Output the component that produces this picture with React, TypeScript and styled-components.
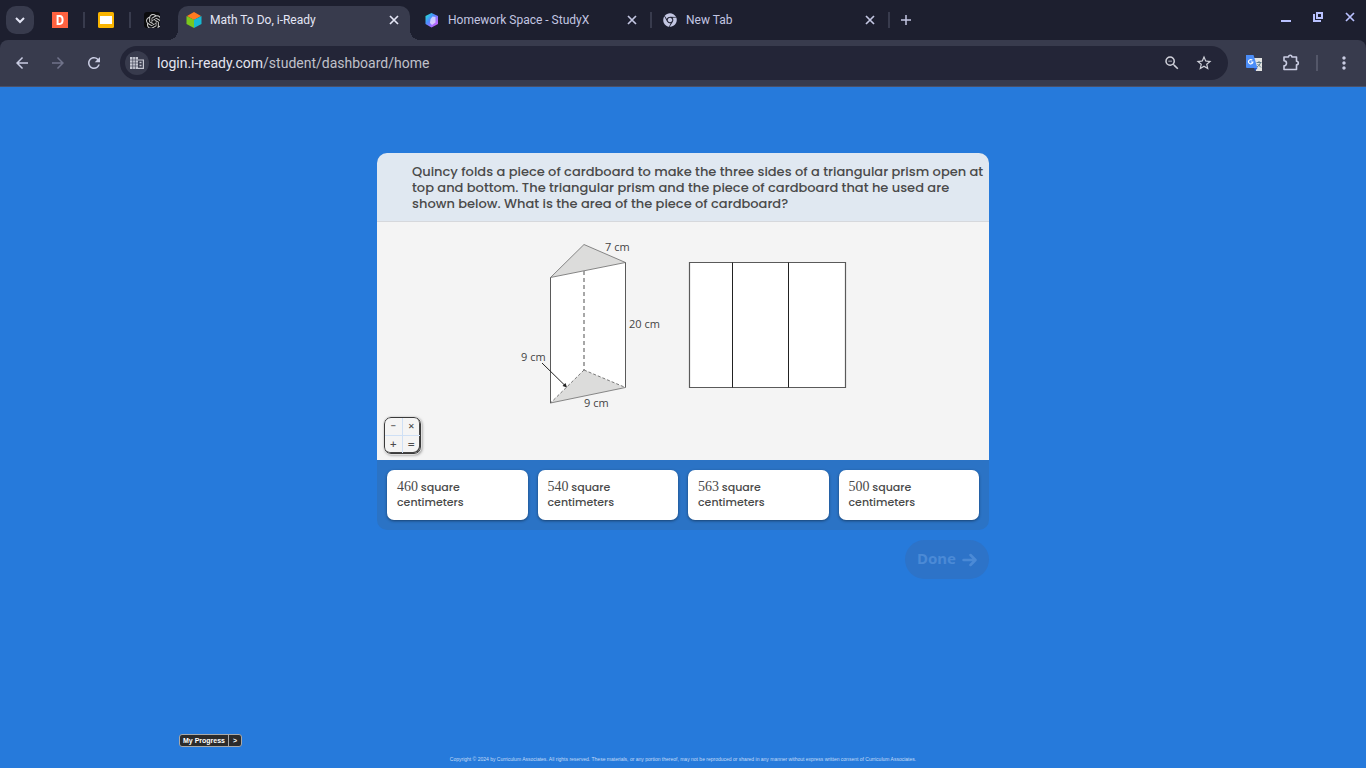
import React from "react";
import styled, { createGlobalStyle, css } from "styled-components";
import {
  MdArrowBack,
  MdArrowForward,
  MdMoreVert,
  MdRefresh,
  MdStarOutline,
  MdZoomOut,
} from "react-icons/md";
import { FaChrome } from "react-icons/fa";
import { SiOpenai } from "react-icons/si";

const GlobalStyle = createGlobalStyle`
  * { box-sizing: border-box; }
  body { margin: 0; background: #267adb; font-family: Roboto, "Liberation Sans", sans-serif; }
  button, input { font: inherit; color: inherit; }
  button { border: 0; padding: 0; background: none; cursor: pointer; }
`;

const Page = styled.div`
  display: flex;
  flex-direction: column;
  min-height: 100vh;
`;

const TabStrip = styled.div`
  display: flex;
  align-items: flex-end;
  height: 40px;
  padding-left: 6px;
  background: #1d1f2f;
`;

const TabSearch = styled.button`
  display: grid;
  place-items: center;
  flex: none;
  width: 28px;
  height: 28px;
  margin: 0 3px 6px 0;
  border-radius: 10px;
  background: #383b4d;
  color: #e4e6f5;
`;

const separator = css`
  &::after {
    content: "";
    position: absolute;
    left: 100%;
    top: 6px;
    width: 2px;
    height: 16px;
    background: #383b4d;
  }
`;

const PinnedTab = styled.button<{ $divided?: boolean }>`
  position: relative;
  display: grid;
  place-items: center;
  flex: none;
  width: 46px;
  height: 28px;
  margin-bottom: 6px;
  ${(p) => p.$divided && separator}
`;

const Tab = styled.div<{ $active?: boolean; $divided?: boolean }>`
  position: relative;
  display: flex;
  align-items: center;
  gap: 8px;
  flex: 0 1 ${(p) => (p.$active ? 232 : 238)}px;
  min-width: 0;
  height: ${(p) => (p.$active ? 34 : 28)}px;
  margin: ${(p) => (p.$active ? "0 2px 0 3px" : "0 0 6px")};
  padding: ${(p) => (p.$active ? "0 8px 6px" : "0 10px 0 12px")};
  color: ${(p) => (p.$active ? "#e4e6f5" : "#c3c6e2")};
  font-size: 12px;
  line-height: 16px;
  ${(p) => p.$divided && separator}
  ${(p) =>
    p.$active &&
    css`
      border-radius: 10px 10px 0 0;
      background: #383b4d;
      &::before,
      &::after {
        content: "";
        position: absolute;
        bottom: 0;
        width: 10px;
        height: 10px;
      }
      &::before {
        right: 100%;
        background: radial-gradient(circle at 0 0, transparent 10px, #383b4d 10px);
      }
      &::after {
        left: 100%;
        background: radial-gradient(circle at 100% 0, transparent 10px, #383b4d 10px);
      }
    `}
`;

const TabIcon = styled.span`
  display: grid;
  place-items: center;
  flex: none;
  width: 16px;
  height: 16px;
`;

const TabTitle = styled.span`
  flex: 1;
  overflow: hidden;
  white-space: nowrap;
`;

const IconButton = styled.button<{ $size?: number; $dim?: boolean }>`
  display: grid;
  place-items: center;
  flex: none;
  width: ${(p) => p.$size ?? 16}px;
  height: ${(p) => p.$size ?? 16}px;
  color: ${(p) => (p.$dim ? "#70738a" : "inherit")};
`;

const NewTab = styled(IconButton)`
  margin: 0 0 12px 10px;
  color: #c3c6e2;
`;

const WindowControls = styled.div`
  display: flex;
  align-self: flex-start;
  gap: 16px;
  margin-left: auto;
  padding: 9px 8px 0 0;
  color: #b9c1ff;
`;

const ToolbarBack = styled.div`
  background: #1d1f2f;
`;

const Toolbar = styled.div`
  display: flex;
  align-items: center;
  height: 47px;
  padding: 0 12px;
  border-bottom: 1px solid #4b5067;
  border-radius: 8px 8px 0 0;
  background: #383b4d;
  color: #c9cce2;
`;

const NavButtons = styled.div`
  display: flex;
  gap: 16px;
  margin-right: 16px;
`;

const AddressBar = styled.div`
  display: flex;
  align-items: center;
  flex: 1;
  min-width: 0;
  height: 34px;
  padding: 0 14px 0 5px;
  gap: 12px;
  border-radius: 17px;
  background: #232537;
  color: #d0d1da;
`;

const SiteInfo = styled.button`
  display: grid;
  place-items: center;
  flex: none;
  width: 24px;
  height: 24px;
  border-radius: 50%;
  background: #383b4d;
  color: #c5c7d2;
`;

const Address = styled.a`
  flex: 1;
  margin-left: -4px;
  overflow: hidden;
  white-space: nowrap;
  font-size: 14px;
  line-height: 20px;
  color: #c0c1ca;
  text-decoration: none;
`;

const Host = styled.span`
  color: #e3e4ef;
`;

const Extensions = styled.div`
  display: flex;
  align-items: center;
  gap: 16px;
  margin-left: 16px;
`;

const ToolbarDivider = styled.span`
  width: 2px;
  height: 16px;
  background: #545769;
`;

const Lesson = styled.main`
  display: flex;
  flex-direction: column;
  align-items: flex-end;
  gap: 10px;
  width: 100%;
  max-width: 612px;
  margin: 0 auto;
  padding-top: 66px;
`;

const Card = styled.section`
  width: 100%;
  overflow: hidden;
  border-radius: 10px;
  background: #2b73c5;
  color: #4a4a4a;
  font-family: Poppins, Inter, sans-serif;
`;

const Question = styled.h1`
  margin: 0;
  padding: 11px 4px 9px 35px;
  border-bottom: 1px solid #d6d8dc;
  background: #e0e8f1;
  font-size: 13px;
  font-weight: 500;
  line-height: 16px;
`;

const FigurePanel = styled.div`
  position: relative;
  display: flex;
  justify-content: center;
  padding: 14px 0 44px;
  background: #f4f4f4;
`;

const Figure = styled.svg`
  display: block;
  max-width: 100%;
  font-family: "Open Sans", sans-serif;
  font-size: 11px;
  font-weight: 400;
`;

const Calculator = styled.button`
  position: absolute;
  left: 7px;
  bottom: 6px;
  display: grid;
  grid-template-columns: 1fr 1fr;
  width: 37px;
  height: 37px;
  overflow: hidden;
  border: 1px solid #3a3a3a;
  border-radius: 7px;
  outline: 1px solid #dedede;
  background: #f4f4f4;
  box-shadow: inset -1px -1px 0 #444, 1px 1px 3px #00000080;
  font-size: 11px;
  line-height: 17px;
`;

const Key = styled.span`
  border: 0 solid #cfe0f5;
  &:nth-child(odd) {
    border-right-width: 1px;
  }
  &:nth-child(-n + 2) {
    border-bottom-width: 1px;
  }
`;

const Answers = styled.div`
  display: grid;
  grid-template-columns: repeat(auto-fit, minmax(120px, 1fr));
  gap: 10px;
  padding: 10px;
`;

const Answer = styled.button`
  padding: 10px;
  border-radius: 7px;
  background: #fff;
  box-shadow: 0 1px 3px #00000070;
  text-align: left;
  font-size: 11px;
  font-weight: 500;
  line-height: 15px;
`;

const MathNumber = styled.span`
  font-family: "Liberation Serif", serif;
  font-size: 14px;
  font-weight: 400;
  line-height: 10px;
`;

const DoneButton = styled.button`
  display: flex;
  align-items: center;
  gap: 6px;
  height: 39px;
  padding: 0 12px;
  border-radius: 20px;
  background: #2d73c8;
  color: #4b8ad6;
  font-family: "Noto Sans", sans-serif;
  font-size: 15px;
  font-weight: 700;
  line-height: 20px;
`;

const DoneLabel = styled.span`
  padding-bottom: 3px;
`;

const Footer = styled.footer`
  width: 100%;
  max-width: 1008px;
  margin: auto auto 0;
  padding-bottom: 5px;
`;

const Progress = styled.div`
  display: flex;
  width: max-content;
  overflow: hidden;
  border: 1px solid #a9a9a9;
  border-radius: 3px;
  background: #2b2b2b;
  color: #fff;
  font-family: "Liberation Sans", sans-serif;
  font-size: 7px;
  font-weight: 700;
  line-height: 11px;
`;

const ProgressButton = styled.button`
  padding: 0 3px;
  & + & {
    padding: 0 4px;
    border-left: 1px solid #a9a9a9;
  }
`;

const Copyright = styled.p`
  margin: 8px 0 0;
  color: #c4dbf6;
  font-family: "Liberation Sans", sans-serif;
  font-size: 5px;
  line-height: 8px;
  text-align: center;
`;

const ChevronIcon = () => (
  <svg width="12" height="12" viewBox="0 0 12 12" fill="none" stroke="currentColor" strokeWidth="2">
    <path d="M2 4l4 4 4-4" />
  </svg>
);

const DocIcon = () => (
  <svg width="16" height="16" viewBox="0 0 16 16">
    <rect width="16" height="16" fill="#ff6240" />
    <path d="M5.6 4.1h2c2 0 3 1.5 3 3.9s-1 3.9-3 3.9h-2z" fill="none" stroke="#fff" strokeWidth="2" />
  </svg>
);

const SlidesIcon = () => (
  <svg width="16" height="16" viewBox="0 0 16 16">
    <rect width="16" height="16" rx="1.5" fill="#f9b400" />
    <rect x="2" y="4" width="12" height="8" fill="#fff" />
  </svg>
);

const ChatIcon = () => (
  <svg width="16" height="16" viewBox="0 0 16 16">
    <rect width="16" height="16" rx="3" fill="#0b0b0d" />
    <SiOpenai x="2" y="2" width="12" height="12" color="#c8c8c8" />
  </svg>
);

const CubeIcon = () => (
  <svg width="16" height="16" viewBox="0 0 16 16">
    <path d="M8 0l7 4-7 4-7-4z" fill="#ff7a20" />
    <path d="M.5 4L8 7.8V16L.5 12z" fill="#7ac81e" />
    <path d="M15.500 4L8 7.800V16l7.500-4z" fill="#17b9d3" />
  </svg>
);

const StudyIcon = () => (
  <svg width="16" height="16" viewBox="0 0 16 16">
    <defs>
      <linearGradient id="study" x1="0" y1="0" x2="1" y2="1">
        <stop offset="0" stopColor="#18f0c8" />
        <stop offset=".4" stopColor="#4d8cff" />
        <stop offset=".7" stopColor="#a66cff" />
        <stop offset="1" stopColor="#e05cf5" />
      </linearGradient>
    </defs>
    <path d="M7.500 1L14 4v8l-6.500 3.500L1.500 12V4z" fill="url(#study)" />
    <path d="M8.500 4.500l3 .5v5.500L8 13l-2-2 .5-4z" fill="#ece6ff" opacity=".75" />
  </svg>
);

const CloseIcon = () => (
  <svg width="16" height="16" viewBox="-8 -8 16 16" fill="none" stroke="currentColor" strokeWidth="1.700">
    <path d="M-4 -4L4 4M4 -4L-4 4" />
  </svg>
);

const PlusIcon = () => (
  <svg width="16" height="16" viewBox="0 0 16 16" fill="none" stroke="currentColor" strokeWidth="1.500">
    <path d="M8 3v10M3 8h10" />
  </svg>
);

const BuildingIcon = () => (
  <svg width="14" height="12" viewBox="0 0 14 12">
    <path d="M0 0h8v12H0z" fill="currentColor" />
    <path d="M8 3h5.400v8.400H8" fill="none" stroke="currentColor" strokeWidth="1.200" />
    <path d="M0 3h8M0 6h8M0 9h8M2.700 0v12M5.400 0v12" stroke="#383b4d" strokeWidth=".6" />
    <path d="M9.500 5.500h2M9.500 8.500h2" stroke="currentColor" strokeWidth="1.300" />
  </svg>
);

const PuzzleIcon = () => (
  <svg width="20" height="20" viewBox="0 0 20 20" fill="none" stroke="currentColor" strokeWidth="1.600" strokeLinejoin="round">
    <path d="M4 4h4.500a1.700 1.700 0 0 1 3.400 0H16.500v4.300a1.700 1.700 0 0 1 0 3.600V16.500H4v-3.700a2.500 2.500 0 0 0 0-5z" />
  </svg>
);

const TranslateIcon = () => (
  <svg width="16" height="16" viewBox="0 0 16 16">
    <path d="M7 3h9v13H10z" fill="#e3e4e2" />
    <path d="M10.500 7.500h5M13 6v1.500M14.500 7.500c-.5 2-2 3.500-3.500 4.500M11.500 9l3.500 3.500" fill="none" stroke="#607d8b" />
    <path d="M8 13h3.500L9 16z" fill="#2352c4" />
    <path d="M0 0h7.500l4 13H1a1 1 0 0 1-1-1z" fill="#4b8df8" />
    <path d="M6.300 5.200A2.200 2.200 0 1 0 6.900 7H4.800" fill="none" stroke="#fff" strokeWidth="1.200" />
  </svg>
);

const MinimizeIcon = () => (
  <svg width="16" height="16" viewBox="0 0 16 16">
    <path d="M3 11h10v2H3z" fill="currentColor" />
  </svg>
);

const RestoreIcon = () => (
  <svg width="16" height="16" viewBox="0 0 16 16" fill="none" stroke="currentColor" strokeWidth="2">
    <path d="M7 4h5v5H7zM4 5v7h7" />
  </svg>
);

const PrismFigure = () => (
  <Figure width="340" height="180" viewBox="0 0 340 180" role="img" aria-label="Triangular prism and flat cardboard">
    <g fill="none" stroke="#5a5a5a">
      <path d="M37.500 41.500L112.500 26.500V151.500L37.500 167z" fill="#fff" stroke="none" />
      <path d="M71 134L112.500 151.500L37.500 167z" fill="#dcdcdb" stroke="none" />
      <path d="M71 8.500L112.500 26.500L37.500 41.500z" fill="#dcdcdb" strokeWidth=".7" />
      <path d="M37.500 41.500V167M112.500 26.500V151.500" />
      <path d="M37.500 167L112.500 151.500" strokeWidth=".7" />
      <path d="M71 35V134" stroke="#8a8a8a" strokeWidth="1.500" strokeDasharray="4 3" />
      <path d="M71 134L112.500 151.500M71 134L37.500 167" strokeWidth=".8" strokeDasharray="3 2" />
      <path d="M29 127L52 149.500" stroke="#222" />
      <path d="M54 151.500l-4.500-1.500 3-3z" fill="#222" stroke="none" />
      <path d="M176.500 26.500H332.500V151.500H176.500z" fill="#fff" strokeWidth="1.200" />
      <path d="M219.500 26.500V151.500M275.500 26.500V151.500" stroke="#222" />
    </g>
    <g fill="#444">
      <text x="92" y="15">7 cm</text>
      <text x="116" y="92">20 cm</text>
      <text x="8" y="125">9 cm</text>
      <text x="71" y="171">9 cm</text>
    </g>
  </Figure>
);

const answers = [460, 540, 563, 500];

export default function App() {
  return (
    <Page>
      <GlobalStyle />
      <TabStrip>
        <TabSearch aria-label="Search tabs"><ChevronIcon /></TabSearch>
        <PinnedTab $divided aria-label="Pinned document"><DocIcon /></PinnedTab>
        <PinnedTab $divided aria-label="Pinned slides"><SlidesIcon /></PinnedTab>
        <PinnedTab aria-label="Pinned chat"><ChatIcon /></PinnedTab>
        <Tab $active>
          <TabIcon><CubeIcon /></TabIcon>
          <TabTitle>Math To Do, i-Ready</TabTitle>
          <IconButton aria-label="Close tab"><CloseIcon /></IconButton>
        </Tab>
        <Tab $divided>
          <TabIcon><StudyIcon /></TabIcon>
          <TabTitle>Homework Space - StudyX</TabTitle>
          <IconButton aria-label="Close tab"><CloseIcon /></IconButton>
        </Tab>
        <Tab $divided>
          <TabIcon><FaChrome size={14} /></TabIcon>
          <TabTitle>New Tab</TabTitle>
          <IconButton aria-label="Close tab"><CloseIcon /></IconButton>
        </Tab>
        <NewTab aria-label="New tab"><PlusIcon /></NewTab>
        <WindowControls>
          <IconButton aria-label="Minimize"><MinimizeIcon /></IconButton>
          <IconButton aria-label="Restore"><RestoreIcon /></IconButton>
          <IconButton aria-label="Close window"><CloseIcon /></IconButton>
        </WindowControls>
      </TabStrip>

      <ToolbarBack>
        <Toolbar>
          <NavButtons>
            <IconButton $size={20} aria-label="Back"><MdArrowBack size={18} /></IconButton>
            <IconButton $size={20} $dim aria-label="Forward"><MdArrowForward size={18} /></IconButton>
            <IconButton $size={20} aria-label="Reload"><MdRefresh size={18} /></IconButton>
          </NavButtons>
          <AddressBar>
            <SiteInfo aria-label="Site information"><BuildingIcon /></SiteInfo>
            <Address href="#"><Host>login.i-ready.com</Host>/student/dashboard/home</Address>
            <IconButton $size={20} aria-label="Zoom"><MdZoomOut size={18} /></IconButton>
            <IconButton $size={20} aria-label="Bookmark"><MdStarOutline size={18} /></IconButton>
          </AddressBar>
          <Extensions>
            <IconButton $size={20} aria-label="Translate"><TranslateIcon /></IconButton>
            <IconButton $size={20} aria-label="Extensions"><PuzzleIcon /></IconButton>
            <ToolbarDivider />
            <IconButton $size={20} aria-label="Menu"><MdMoreVert size={20} /></IconButton>
          </Extensions>
        </Toolbar>
      </ToolbarBack>

      <Lesson>
        <Card>
          <Question>
            Quincy folds a piece of cardboard to make the three sides of a triangular prism open at<br />
            top and bottom. The triangular prism and the piece of cardboard that he used are<br />
            shown below. What is the area of the piece of cardboard?
          </Question>
          <FigurePanel>
            <PrismFigure />
            <Calculator aria-label="Calculator">
              <Key>−</Key>
              <Key>×</Key>
              <Key>+</Key>
              <Key>=</Key>
            </Calculator>
          </FigurePanel>
          <Answers>
            {answers.map((n) => (
              <Answer key={n}>
                <MathNumber>{n}</MathNumber> square<br />centimeters
              </Answer>
            ))}
          </Answers>
        </Card>
        <DoneButton>
          <DoneLabel>Done</DoneLabel>
          <svg width="15" height="14" viewBox="0 0 15 14" fill="none" stroke="currentColor" strokeWidth="2.500" strokeLinecap="round" strokeLinejoin="round">
            <path d="M1.500 7H13M8.500 2L13.500 7L8.500 12" />
          </svg>
        </DoneButton>
      </Lesson>

      <Footer>
        <Progress>
          <ProgressButton>My Progress</ProgressButton>
          <ProgressButton aria-label="Expand progress">&gt;</ProgressButton>
        </Progress>
        <Copyright>
          Copyright © 2024 by Curriculum Associates. All rights reserved. These materials, or any portion thereof, may not be reproduced or shared in any manner without express written consent of Curriculum Associates.
        </Copyright>
      </Footer>
    </Page>
  );
}
